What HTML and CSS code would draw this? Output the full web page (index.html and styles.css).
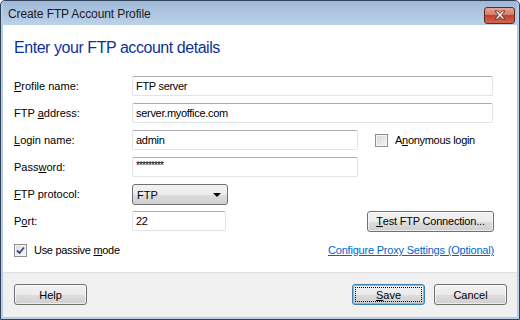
FILE: index.html
```html
<!DOCTYPE html>
<html lang="en">
<head>
  <meta charset="UTF-8"/>
  <title>Create FTP Account Profile</title>
  <link rel="stylesheet" href="styles.css">
</head>
<body>
  <div class="window">
    <div class="titlebar">
      <span class="title">Create FTP Account Profile</span>
      <div class="close-btn">
        <svg width="16" height="10" viewBox="0 0 16 10">
          <path d="M3 1 L6 1 L8 3.5 L10 1 L13 1 L9.6 5 L13 9 L10 9 L8 6.5 L6 9 L3 9 L6.4 5 Z" fill="#fff" stroke="#5a2a22" stroke-width="0.9" stroke-linejoin="round"/>
        </svg>
      </div>
    </div>

    <div class="client">
      <div class="content">
        <h1>Enter your FTP account details</h1>

        <div class="form">
          <label><u>P</u>rofile name:</label>
          <div class="field"><div class="textbox full">FTP server</div></div>

          <label>FTP <u>a</u>ddress:</label>
          <div class="field"><div class="textbox full">server.myoffice.com</div></div>

          <label><u>L</u>ogin name:</label>
          <div class="field start">
            <div class="textbox mid">admin</div>
            <div class="check anon">
              <span class="box"></span>
              <span class="check-label">A<u>n</u>onymous login</span>
            </div>
          </div>

          <label>Pass<u>w</u>ord:</label>
          <div class="field"><div class="textbox mid pwd">*********</div></div>

          <label><u>F</u>TP protocol:</label>
          <div class="field tall">
            <div class="dropdown">
              <span>FTP</span>
              <span class="arrow"></span>
            </div>
          </div>

          <label>P<u>o</u>rt:</label>
          <div class="field">
            <div class="textbox small">22</div>
            <button class="btn test"><u>T</u>est FTP Connection...</button>
          </div>
        </div>

        <div class="bottom-row">
          <div class="check">
            <span class="box checked">
              <svg width="9" height="9" viewBox="0 0 9 9">
                <path d="M1 4.5 L3.5 7 L8 1.5" fill="none" stroke="#33488c" stroke-width="1.8"/>
              </svg>
            </span>
            <span class="check-label">Use passive <u>m</u>ode</span>
          </div>
          <a class="link" href="#">Configure Proxy Settings (Optional)</a>
        </div>
      </div>

      <div class="footer">
        <button class="btn">Help</button>
        <div class="footer-right">
          <button class="btn default"><span class="focus"><u>S</u>ave</span></button>
          <button class="btn">Cancel</button>
        </div>
      </div>
    </div>
  </div>
</body>
</html>
```

FILE: styles.css
```css
* {
  box-sizing: border-box;
  margin: 0;
  padding: 0;
}

body {
  font-family: 'Liberation Sans', Arial, sans-serif;
  font-size: 11px;
  color: #000;
  background: #fff;
}

.window {
  width: 520px;
  height: 320px;
  border: 1px solid #2f4157;
  border-radius: 5px 5px 0 0;
  background: #b7cde6;
  padding: 0 2px 2px 2px;
  display: flex;
  flex-direction: column;
}

.titlebar {
  height: 24px;
  display: flex;
  align-items: center;
  justify-content: space-between;
  padding: 0 2px 0 5px;
  background: linear-gradient(#9fb8d6, #bcd2ea);
  border-radius: 4px 4px 0 0;
}

.title {
  font-size: 12px;
  color: #1a1a1a;
  letter-spacing: -0.1px;
  margin-top: 1px;
}

.close-btn {
  width: 31px;
  height: 17px;
  margin-top: 4px;
  border: 1px solid #5e2b24;
  border-radius: 3px;
  background: linear-gradient(#e5a495 0%, #d77a66 45%, #c2412c 50%, #d2674f 100%);
  display: flex;
  justify-content: center;
  align-items: center;
}

.client {
  flex: 1;
  display: flex;
  flex-direction: column;
  background: #fff;
}

.content {
  flex: 1;
  padding: 12px 23px 0 11px;
  border-bottom: 1px solid #dfdfdf;
}

h1 {
  font-size: 16px;
  font-weight: normal;
  color: #0d3397;
  letter-spacing: -0.45px;
  line-height: 21px;
  margin-bottom: 18px;
}

.form {
  display: grid;
  grid-template-columns: 118px 1fr;
  grid-auto-rows: 20px;
  row-gap: 7px;
  align-items: center;
}

.form label {
  display: block;
  line-height: 20px;
  height: 20px;
  white-space: nowrap;
}

.field {
  display: flex;
  align-items: center;
  justify-content: space-between;
  height: 20px;
}

.field.start {
  justify-content: flex-start;
}

.field.tall {
  height: 21px;
}

.form .field.tall {
  margin-bottom: -1px;
}

.textbox {
  height: 20px;
  border: 1px solid #e2e3ea;
  border-top-color: #abadb3;
  border-radius: 2px;
  padding: 0 3px;
  display: flex;
  align-items: center;
  letter-spacing: -0.3px;
}

.textbox.full {
  width: 361px;
}

.textbox.mid {
  width: 226px;
}

.textbox.small {
  width: 94px;
}

.textbox.pwd {
  font-size: 10px;
  letter-spacing: -0.9px;
  align-items: flex-start;
  padding-top: 2px;
}

.check {
  display: flex;
  align-items: center;
  gap: 7px;
}

.check-label {
  white-space: nowrap;
  letter-spacing: -0.3px;
}

.anon {
  margin-left: 17px;
}

.box {
  width: 13px;
  height: 13px;
  border: 1px solid #8e8f8f;
  background: linear-gradient(135deg, #d6d6d6, #f4f4f4);
  box-shadow: inset 0 0 0 1px #f4f4f4;
  display: flex;
  align-items: center;
  justify-content: center;
}

.box.checked {
  background: linear-gradient(135deg, #dcdcdc, #f8f8f8);
}

.dropdown {
  width: 96px;
  height: 21px;
  border: 1px solid #707070;
  border-radius: 3px;
  background: linear-gradient(#f2f2f2 0%, #ebebeb 50%, #dddddd 51%, #cfcfcf 100%);
  display: flex;
  align-items: center;
  justify-content: space-between;
  padding: 0 6px 0 4px;
}

.arrow {
  width: 0;
  height: 0;
  border-left: 4px solid transparent;
  border-right: 4px solid transparent;
  border-top: 4px solid #000;
}

.btn {
  font-family: 'Liberation Sans', Arial, sans-serif;
  font-size: 11px;
  color: #000;
  height: 21px;
  width: 73px;
  border: 1px solid #707070;
  border-radius: 3px;
  background: linear-gradient(#f2f2f2 0%, #ebebeb 50%, #dddddd 51%, #cfcfcf 100%);
  box-shadow: inset 0 0 0 1px rgba(255, 255, 255, 0.6);
  display: flex;
  align-items: center;
  justify-content: center;
}

.btn.test {
  width: 127px;
  letter-spacing: -0.2px;
}

.btn.default {
  border-color: #3c7fb1;
  box-shadow: inset 0 0 0 1px #48d5f3;
  padding: 2px;
}

.focus {
  flex: 1;
  align-self: stretch;
  border: 1px dotted #000;
  display: flex;
  align-items: center;
  justify-content: center;
}

.bottom-row {
  display: flex;
  justify-content: space-between;
  align-items: center;
  margin-top: 12px;
  height: 14px;
}

.link {
  color: #0066cc;
  text-decoration: underline;
  letter-spacing: -0.2px;
}

.footer {
  height: 44px;
  background: #f0f0f0;
  display: flex;
  justify-content: space-between;
  padding: 11px 10px 0 11px;
}

.footer-right {
  display: flex;
  gap: 9px;
}
```
